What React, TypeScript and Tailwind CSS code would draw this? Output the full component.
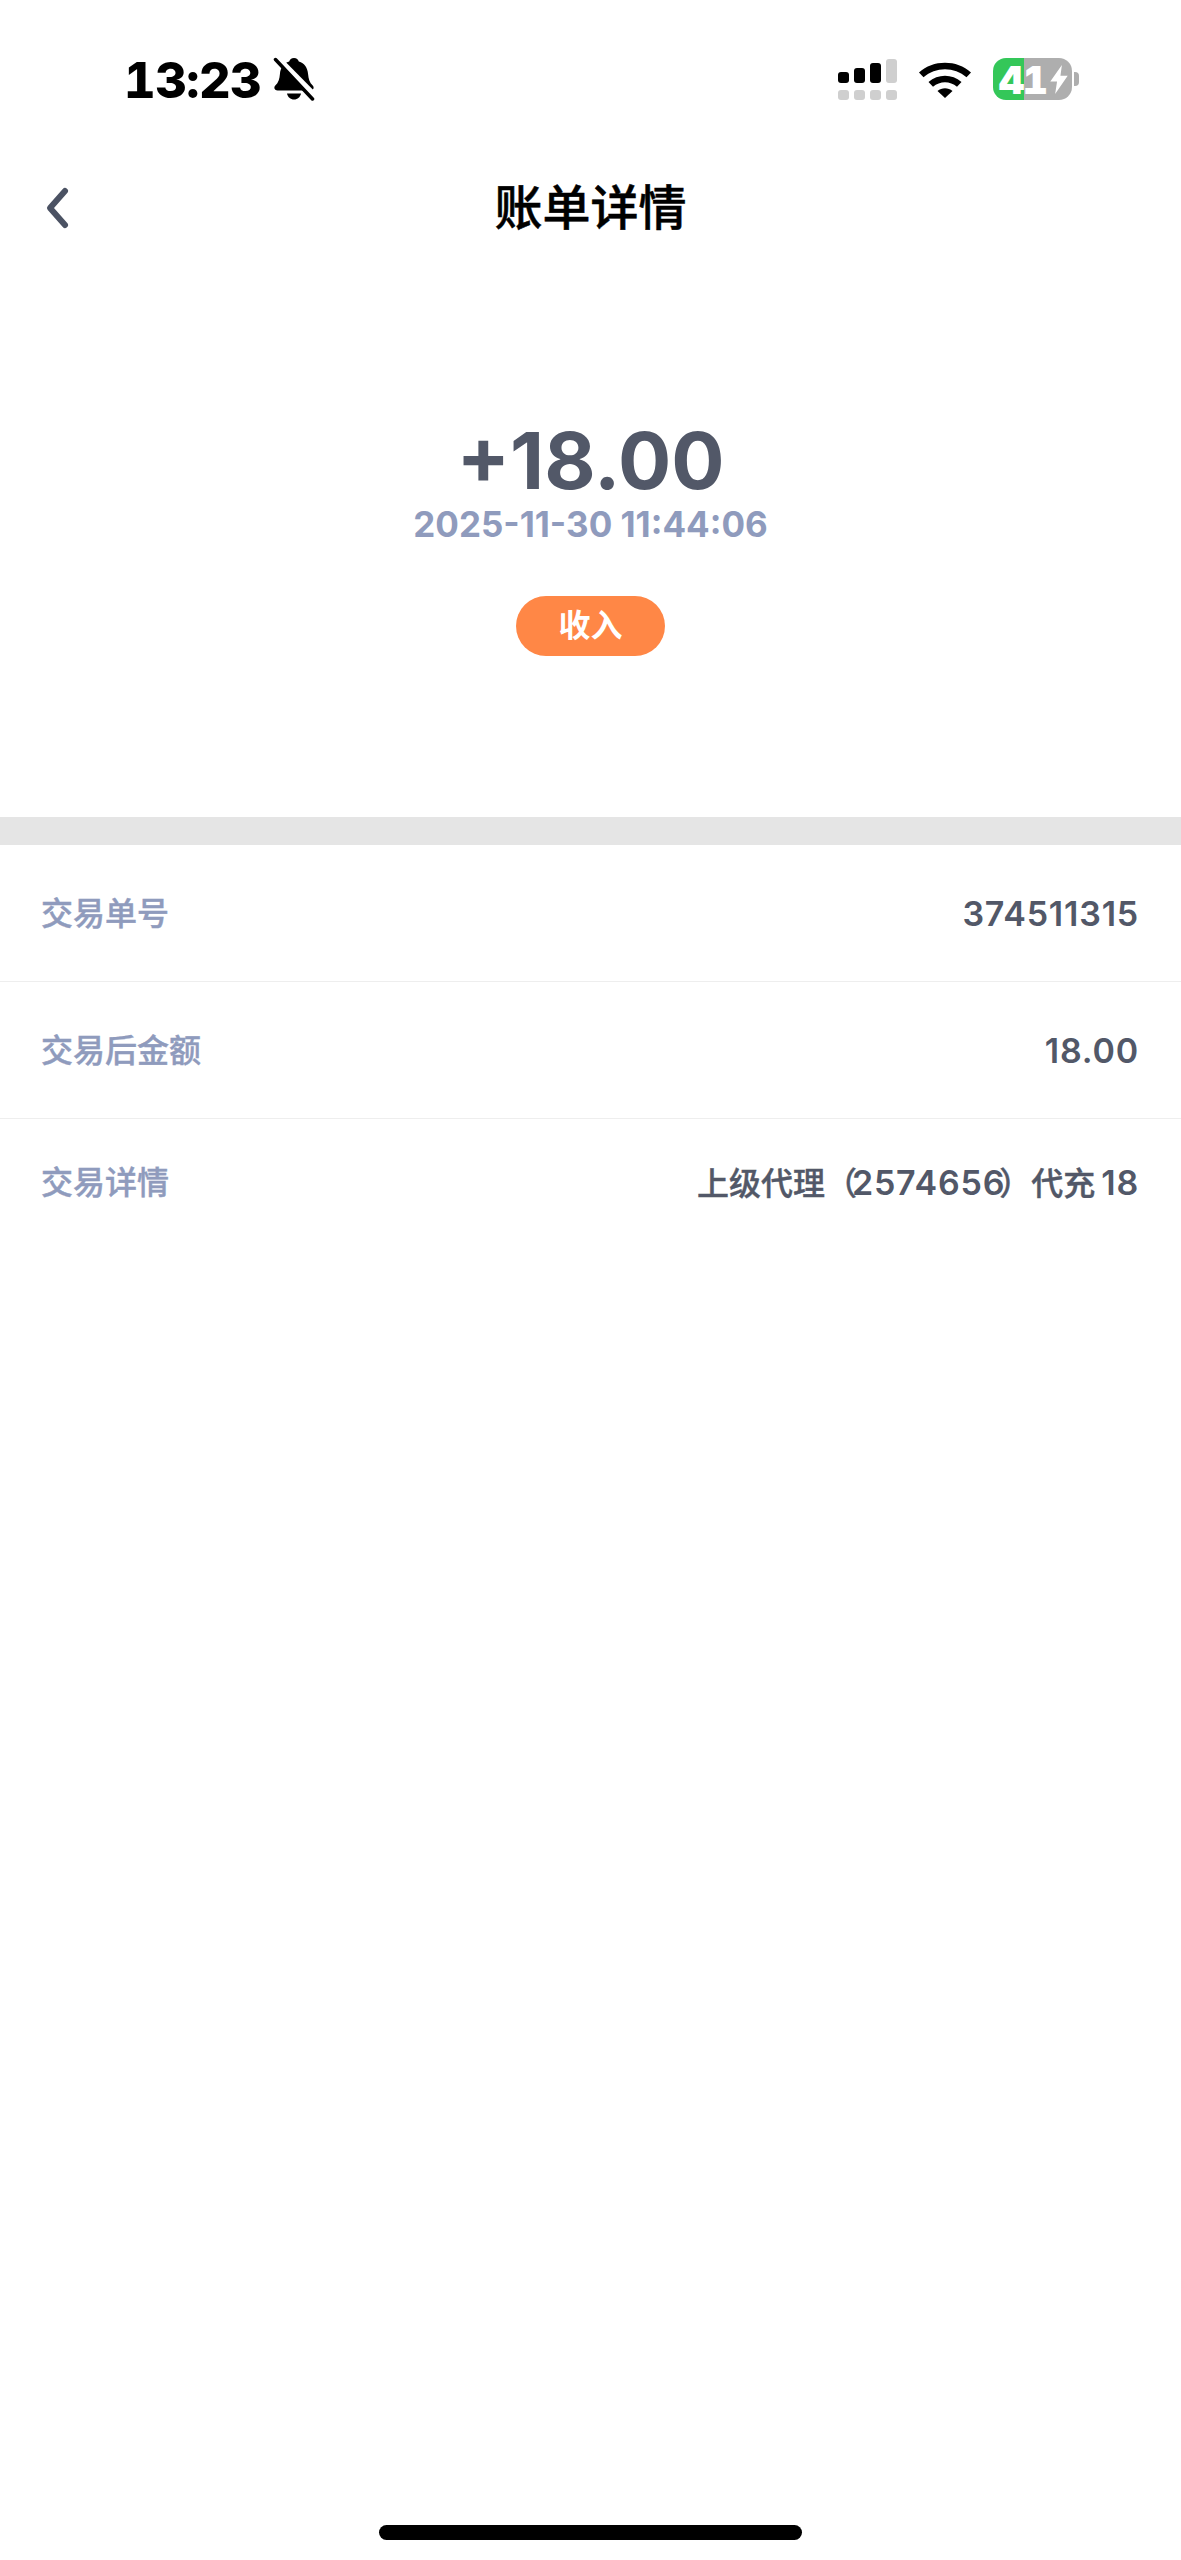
import type { ReactNode } from 'react';

const sans = 'font-["Inter","Noto_Sans_CJK_SC",sans-serif]';

function BellOff() {
  return (
    <svg width="42" height="44" viewBox="0 0 42 44" fill="none">
      <path
        d="M21 1c2.600 0 4.300 1.500 4.800 3.600 5.800 1.700 8.700 6.400 9.300 12.600.4 4.600 1.400 8.200 4.600 11.400 1.800 1.800.9 4.900-2.300 4.900H4.600c-3.200 0-4.100-3.100-2.300-4.900 3.200-3.200 4.200-6.800 4.600-11.400.6-6.200 3.500-10.900 9.300-12.600C16.700 2.500 18.400 1 21 1Z"
        fill="#000"
      />
      <path d="M14 36.500h14c-.6 3.400-3.400 6-7 6s-6.400-2.600-7-6Z" fill="#000" />
      <path d="M4 0.500 43 40" stroke="#fff" strokeWidth="6" />
      <path d="M2.500 2.500 39.500 42" stroke="#000" strokeWidth="3.500" strokeLinecap="round" />
    </svg>
  );
}

function Signal() {
  const top = [
    'h-[11px]',
    'h-[15px]',
    'h-[20px]',
    'h-[24px]',
  ];
  return (
    <div className="flex flex-col gap-[7px]">
      <div className="flex items-end gap-[5px] h-[24px]">
        {top.map((h, i) => (
          <div key={i} className={`w-[11px] rounded-[3px] ${h} ${i === 3 ? 'bg-[#cfcfcf]' : 'bg-black'}`} />
        ))}
      </div>
      <div className="flex gap-[5px]">
        {top.map((_, i) => (
          <div key={i} className="w-[11px] h-[10px] rounded-[3px] bg-[#cfcfcf]" />
        ))}
      </div>
    </div>
  );
}

function Wifi() {
  return (
    <svg width="54" height="38" viewBox="0 0 54 38" fill="none">
      <path d="M1 12.500C15 -0.500 39 -0.500 53 12.500l-4.500 4.800C36.500 6.500 17.500 6.500 5.500 17.300Z" fill="#000" />
      <path d="M10.500 22c9.500-8.500 23.500-8.500 33 0l-4.500 4.800c-7-6-17-6-24 0Z" fill="#000" />
      <path d="M19.500 31c4.300-3.600 10.700-3.600 15 0L27 38Z" fill="#000" />
    </svg>
  );
}

function Bolt() {
  return (
    <svg width="20" height="29" viewBox="0 0 20 30" className="ml-[3px]">
      <path d="M13 0 1 17h7l-2 13L19 11h-7.500Z" fill="#fff" />
    </svg>
  );
}

function Battery() {
  return (
    <div className="flex items-center gap-[2px]">
      <div className="w-[79px] h-[42px] rounded-[13px] bg-[linear-gradient(90deg,#34c759_39.500%,#aeaeae_39.500%)] flex items-center pl-[6px]">
        <span className="text-white text-[39px] font-black leading-none tracking-[-1.500px] tabular-nums">41</span>
        <Bolt />
      </div>
      <div className="w-[5px] h-[14px] rounded-r-[4px] bg-[#aeaeae]" />
    </div>
  );
}

function Num({ children }: { children: ReactNode }) {
  return <span className="text-[34px] font-semibold tracking-[0.800px] [-webkit-text-stroke:0px]">{children}</span>;
}

function Row({ label, value, last }: { label: string; value: ReactNode; last?: boolean }) {
  return (
    <div className={`flex items-center justify-between pl-[41px] pr-[42px] pt-[2px] text-[32px] font-medium leading-[44px] [-webkit-text-stroke:0.4px] ${last ? 'h-[126px]' : 'h-[137px] border-b-[1px] border-[#eeeeee]'}`}>
      <span className="text-[#8f9bbd]">{label}</span>
      <span className="text-[#525868]">{value}</span>
    </div>
  );
}

export default function App() {
  return (
    <div className={`w-[1181px] h-[2560px] flex flex-col bg-white ${sans}`}>
      <div className="h-[160px] flex items-start justify-between pt-[58px] pl-[124px] pr-[102px]">
        <div className="flex items-center gap-[12px] h-[42px]">
          <span className="text-[49px] font-extrabold leading-none text-black mt-[3px] tabular-nums tracking-[-0.500px]">13:23</span>
          <BellOff />
        </div>
        <div className="flex items-center gap-[21px]">
          <Signal />
          <Wifi />
          <Battery />
        </div>
      </div>

      <div className="h-[96px] flex items-center justify-center relative">
        <div className="absolute left-[44px] top-[26px]">
          <svg width="26" height="44" viewBox="0 0 26 44" fill="none">
            <path d="M21 5 6 22l15 17" stroke="#4b5263" strokeWidth="6" strokeLinecap="round" strokeLinejoin="round" />
          </svg>
        </div>
        <h1 className="text-[48px] font-medium leading-none text-black [-webkit-text-stroke:0.5px]">账单详情</h1>
      </div>

      <div className="h-[561px] flex flex-col items-center pt-[165px]">
        <div className="text-[79px] font-bold leading-[79px] text-[#525868]">+18.00</div>
        <div className="text-[35px] font-bold leading-[36px] text-[#8f9bbd] mt-[6px]">2025-11-30 11:44:06</div>
        <div className="w-[149px] h-[60px] mt-[54px] rounded-full bg-[#ff8746] flex items-center justify-center text-white text-[32px] font-bold">收入</div>
      </div>

      <div className="h-[28px] bg-[#e5e5e5]" />

      <Row label="交易单号" value={<Num>374511315</Num>} />
      <Row label="交易后金额" value={<Num>18.00</Num>} />
      <Row
        label="交易详情"
        value={
          <>
            上级代理（<span className="ml-[-5px] mr-[-6px]"><Num>2574656</Num></span>）代充<span className="ml-[6px]"><Num>18</Num></span>
          </>
        }
        last
      />

      <div className="flex-1" />

      <div className="h-[35px] flex justify-center">
        <div className="w-[423px] h-[15px] rounded-full bg-black" />
      </div>
    </div>
  );
}
